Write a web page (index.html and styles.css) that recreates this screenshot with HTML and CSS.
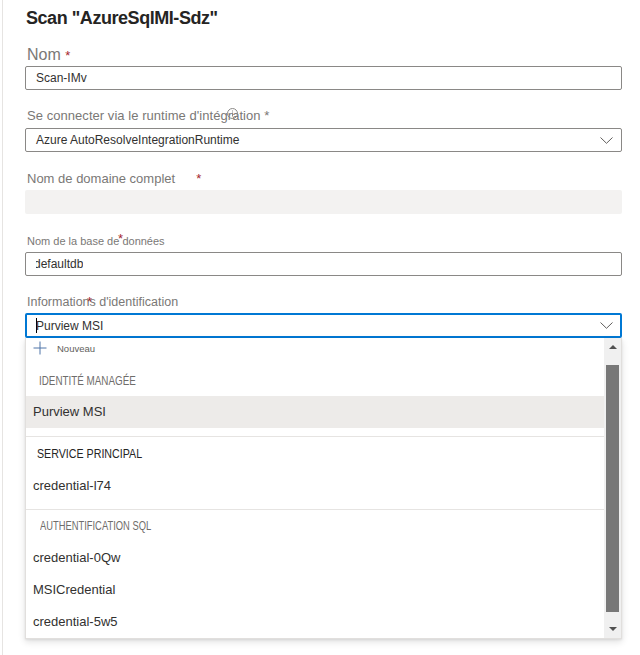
FILE: index.html
```html
<!DOCTYPE html>
<html lang="fr">
<head>
<meta charset="utf-8">
<title>Scan</title>
<link rel="stylesheet" href="styles.css">
</head>
<body>
<div class="page">
  <h1 class="title">Scan "AzureSqlMI-Sdz"</h1>

  <div class="label l1">Nom <span class="req">*</span></div>
  <div class="field"><span class="val">Scan-IMv</span></div>

  <div class="label l2">Se connecter via le runtime d'intégration *<span class="info"><svg width="11" height="11" viewBox="0 0 11 11"><circle cx="5.5" cy="5.5" r="5" fill="none" stroke="#8a8886" stroke-width="1"/><line x1="5.5" y1="4.5" x2="5.5" y2="8.5" stroke="#8a8886" stroke-width="1"/><line x1="5.5" y1="2.5" x2="5.5" y2="3.5" stroke="#8a8886" stroke-width="1"/></svg></span></div>
  <div class="field"><span class="val">Azure AutoResolveIntegrationRuntime</span><svg class="chev" width="13" height="7" viewBox="0 0 13 7"><polyline points="0.5,0.5 6.5,6.3 12.5,0.5" fill="none" stroke="#605e5c" stroke-width="1"/></svg></div>

  <div class="label l3">Nom de domaine complet<span class="req far">*</span></div>
  <div class="field disabled"></div>

  <div class="label l4">Nom de la base de données<span class="req over o4">*</span></div>
  <div class="field"><span class="clip"><span class="shift">defaultdb</span></span></div>

  <div class="label l5">Informations d'identification<span class="req over o5">*</span></div>
  <div class="field focus"><span class="val"><span class="caret"></span>Purview MSI</span><svg class="chev" width="13" height="7" viewBox="0 0 13 7"><polyline points="0.5,0.5 6.5,6.3 12.5,0.5" fill="none" stroke="#605e5c" stroke-width="1"/></svg></div>

  <div class="menu">
    <div class="list">
      <div class="new"><svg width="14" height="14" viewBox="0 0 14 14"><line x1="7" y1="0.5" x2="7" y2="13.5" stroke="#4f74a8" stroke-width="1"/><line x1="0.5" y1="7" x2="13.5" y2="7" stroke="#4f74a8" stroke-width="1"/></svg><span>Nouveau</span></div>
      <div class="hdr h1"><span>IDENTITÉ MANAGÉE</span></div>
      <div class="item sel">Purview MSI</div>
      <div class="sep s1"></div>
      <div class="hdr h2"><span>SERVICE PRINCIPAL</span></div>
      <div class="item">credential-l74</div>
      <div class="sep s2"></div>
      <div class="hdr h3"><span>AUTHENTIFICATION SQL</span></div>
      <div class="item">credential-0Qw</div>
      <div class="item">MSICredential</div>
      <div class="item">credential-5w5</div>
    </div>
    <div class="scroll">
      <div class="btn up"><span class="tri-up"></span></div>
      <div class="thumb"></div>
      <div class="btn down"><span class="tri-down"></span></div>
    </div>
  </div>
</div>
</body>
</html>
```

FILE: styles.css
```css
html, body {
  margin: 0;
  padding: 0;
  background: #ffffff;
}
body {
  font-family: "Liberation Sans", Arial, sans-serif;
  color: #323130;
}
.page {
  margin-left: 2px;
  border-left: 1px solid #e6e4e2;
  padding: 0 18px 0 22px;
  height: 655px;
  box-sizing: border-box;
}
.title {
  margin: 0;
  padding-left: 1px;
  font-size: 18px;
  font-weight: 700;
  line-height: 36px;
  letter-spacing: -0.45px;
  color: #252423;
}
.label {
  position: relative;
  padding-left: 2px;
  color: #7a7876;
  white-space: nowrap;
}
.l1 { font-size: 16px; padding-top: 7px; line-height: 23px; }
.l2 { font-size: 13px; margin-top: 16px; line-height: 20px; padding-bottom: 2px; letter-spacing: 0.05px; }
.l3 { font-size: 13px; margin-top: 17px; line-height: 20px; padding-bottom: 1px; }
.l4 { font-size: 11px; margin-top: 18px; line-height: 18px; padding-bottom: 2px; }
.l5 { font-size: 12.5px; margin-top: 16px; line-height: 20px; padding-bottom: 1px; }

.req {
  color: #a4262c;
  font-size: 13px;
  line-height: 13px;
}
.far { margin-left: 21px; }
.over { position: absolute; }
.o4 { left: 93px; top: 0; }
.o5 { left: 62px; top: 3px; }

.info {
  position: absolute;
  left: 202px;
  top: 2px;
  width: 11px;
  height: 11px;
  display: flex;
}

.field {
  height: 24px;
  box-sizing: border-box;
  border: 1px solid #8a8886;
  border-radius: 2px;
  display: flex;
  align-items: center;
  justify-content: space-between;
  padding: 0 8px 0 10px;
  font-size: 12px;
  line-height: 22px;
  color: #323130;
}
.field.disabled {
  border: none;
  background: #f3f2f1;
}
.field.focus {
  height: 25px;
  border: 2px solid #0078d4;
  padding: 0 7px 0 9px;
}
.val {
  display: flex;
  align-items: center;
  white-space: nowrap;
}
.caret {
  display: inline-block;
  width: 1px;
  height: 15px;
  background: #000;
  margin-right: -1px;
}
.clip {
  overflow: hidden;
  padding-left: 1px;
}
.shift {
  display: block;
  margin-left: -3px;
}
.chev { display: block; }

.menu {
  display: flex;
  height: 301px;
  box-sizing: border-box;
  border: 1px solid #e1dfdd;
  border-top: none;
  background: #fff;
  box-shadow: 0 3px 7px rgba(0,0,0,0.12), 0 1px 2px rgba(0,0,0,0.08);
}
.list {
  flex: 1;
  min-width: 0;
}
.new {
  height: 20px;
  display: flex;
  align-items: center;
  padding-left: 7px;
  gap: 10px;
  font-size: 9.5px;
  color: #605e5c;
}
.new svg { display: block; }
.hdr {
  white-space: nowrap;
}
.hdr span {
  display: inline-block;
  transform-origin: left center;
}
.h1 {
  padding-top: 8px;
  line-height: 30px;
  padding-left: 13px;
  font-size: 12px;
  color: #6f6d6b;
}
.h1 span { transform: scaleX(0.82); }
.h2 {
  line-height: 33px;
  padding-left: 11px;
  font-size: 13px;
  color: #252423;
}
.h2 span { transform: scaleX(0.82); }
.h3 {
  line-height: 32px;
  padding-left: 14px;
  font-size: 12px;
  color: #6f6d6b;
}
.h3 span { transform: scaleX(0.78); }
.item {
  height: 32px;
  line-height: 32px;
  padding-left: 7px;
  font-size: 13px;
  color: #323130;
  white-space: nowrap;
}
.item.sel { background: #edebe9; }
.sep { border-top: 1px solid #e6e4e2; }
.s1 { margin-top: 8px; }
.s2 { margin-top: 7px; }

.scroll {
  width: 17px;
  background: #f0f0f0;
  display: flex;
  flex-direction: column;
}
.btn {
  display: flex;
  align-items: center;
  justify-content: center;
}
.up { height: 27px; align-items: flex-start; padding-top: 7px; box-sizing: border-box; }
.down { height: 26px; align-items: flex-start; padding-top: 15px; box-sizing: border-box; }
.thumb {
  flex: 1;
  margin: 0 2px;
  background: #787878;
}
.tri-up {
  width: 0; height: 0;
  border-left: 4px solid transparent;
  border-right: 4px solid transparent;
  border-bottom: 4px solid #505050;
}
.tri-down {
  width: 0; height: 0;
  border-left: 4px solid transparent;
  border-right: 4px solid transparent;
  border-top: 4px solid #505050;
}
```
